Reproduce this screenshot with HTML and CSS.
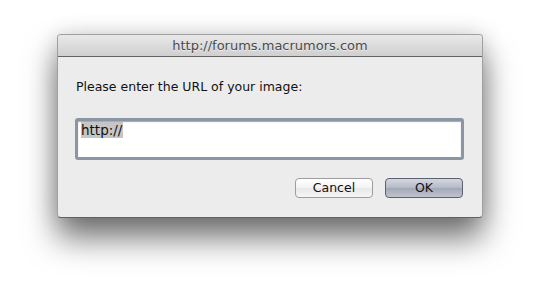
FILE: index.html
```html
<!DOCTYPE html>
<html lang="en">
<head>
    <meta charset="UTF-8">
    <title>Prompt</title>
    <link rel="stylesheet" href="styles.css">
</head>
<body>
    <div class="dialog">
        <div class="title-bar">http://forums.macrumors.com</div>
        <div class="dialog-body">
            <p class="prompt-label">Please enter the URL of your image:</p>
            <div class="url-field"><span class="selected">http://</span></div>
            <div class="buttons">
                <button class="btn cancel">Cancel</button>
                <button class="btn ok">OK</button>
            </div>
        </div>
    </div>
</body>
</html>
```

FILE: styles.css
```css
body {
    margin: 0;
    width: 540px;
    height: 297px;
    background-color: #fff;
    font-family: "Lucida Grande", "DejaVu Sans", sans-serif;
    display: flex;
    justify-content: center;
    align-items: flex-start;
    padding-top: 34px;
    box-sizing: border-box;
    overflow: hidden;
}
.dialog {
    width: 426px;
    height: 184px;
    box-sizing: border-box;
    background-color: #ececec;
    border: 1px solid #a0a0a0;
    border-bottom-color: #606060;
    border-radius: 4px;
    box-shadow: 0 20px 32px rgba(0, 0, 0, 0.55), 0 0 22px rgba(0, 0, 0, 0.14);
    display: flex;
    flex-direction: column;
    overflow: hidden;
}
.title-bar {
    height: 22px;
    box-sizing: border-box;
    border-bottom: 1px solid #616161;
    background: linear-gradient(#e9e9e9, #cfcfcf);
    color: #4a4a4a;
    font-size: 13px;
    line-height: 21px;
    text-align: center;
    text-shadow: 0 1px 0 rgba(255, 255, 255, 0.6);
}
.dialog-body {
    flex: 1;
    padding: 22px 18px 19px 17px;
    display: flex;
    flex-direction: column;
}
.prompt-label {
    margin: 0;
    padding-left: 1px;
    font-size: 12.5px;
    line-height: 16px;
    color: #111;
}
.url-field {
    margin-top: 23px;
    height: 42px;
    box-sizing: border-box;
    background-color: #fff;
    border: 3px solid #8a96a4;
    border-radius: 3px;
    box-shadow: inset 0 1px 1px rgba(0, 0, 0, 0.35);
    padding: 0 0 0 3px;
    font-size: 13.5px;
    line-height: 18px;
    color: #111;
}
.selected {
    background-color: #c6c6c6;
    padding: 0 1px 0 0;
}
.buttons {
    margin-top: auto;
    padding-right: 1px;
    display: flex;
    justify-content: flex-end;
    gap: 12px;
}
.btn {
    width: 78px;
    height: 20px;
    box-sizing: border-box;
    border-radius: 4px;
    font-family: inherit;
    font-size: 12.5px;
    line-height: 16px;
    color: #111;
    padding: 0;
}
.cancel {
    background: linear-gradient(#ffffff, #f3f3f3 50%, #e8e8e8 51%, #f6f6f6);
    border: 1px solid #9d9d9d;
}
.ok {
    background: linear-gradient(#d3d7e0, #b4b9c6 50%, #a2a8b7 51%, #c0c4ce);
    border: 1px solid #5b6073;
}
```
